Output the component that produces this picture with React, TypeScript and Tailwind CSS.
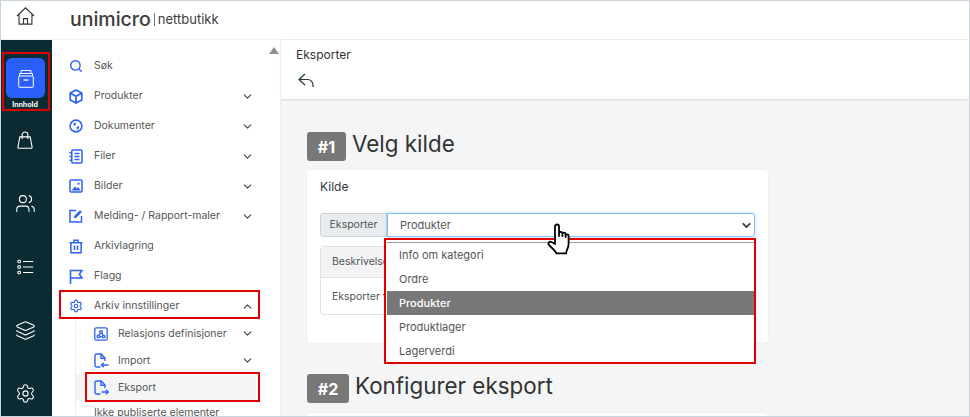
import { ReactNode } from "react";
import { ChevronDown, ChevronUp, Search, Settings, Layers, Users } from "lucide-react";

const blue = "#2f62f5";

function Outline({ w = 14, h = 14, sw = 1.6, children }: { w?: number; h?: number; sw?: number; children: ReactNode }) {
  return (
    <svg width={w} height={h} viewBox={`0 0 ${w} ${h}`} fill="none" stroke={blue} strokeWidth={sw}>
      {children}
    </svg>
  );
}

function CubeIcon() {
  return (
    <Outline h={15} sw={1.7}>
      <path d="M7 1 12.8 4v7L7 14 1.2 11V4zM1.5 4.3 7 7.2l5.5-2.9M7 7.2V14" />
    </Outline>
  );
}

function CompassIcon() {
  return (
    <Outline>
      <circle cx="7" cy="7" r="5.9" />
      <path d="M4 4.8 6.6 3.6 7 5.2 5.4 7zM7.6 8l2-1 .6 2-2 2z" fill={blue} stroke="none" />
    </Outline>
  );
}

function NotebookIcon() {
  return (
    <Outline h={15} sw={1.5}>
      <rect x="2.8" y="1" width="10.2" height="13" rx="1" />
      <path d="M0.5 3.7h2.3M0.5 7.5h2.3M0.5 11.3h2.3M5.5 4.5h5M5.5 7.5h5M5.5 10.5h5" />
    </Outline>
  );
}

function PictureIcon() {
  return (
    <Outline sw={1.5}>
      <rect x="1" y="1" width="12" height="12" rx="1" />
      <path d="M2.5 11.5 6 7.5l2 2 1.5-1.2 2 3.2z" fill={blue} stroke="none" />
      <circle cx="9.6" cy="4.7" r="1.1" fill={blue} stroke="none" />
    </Outline>
  );
}

function PenIcon() {
  return (
    <Outline sw={1.5}>
      <path d="M7 1.5H1v11.5h11.5V7" />
      <path d="M4.8 9.2 5.4 6.8 11 1.2l1.9 1.9L7.2 8.7z" fill={blue} stroke="none" />
    </Outline>
  );
}

function TrashIcon() {
  return (
    <Outline h={15} sw={1.5}>
      <path d="M0.6 3.7h12.8M1.9 3.7v10h10.2v-10M5 3.5V1.2h4v2.3M5.5 6.5v4.5M8.5 6.5v4.5" />
    </Outline>
  );
}

function FlagIcon() {
  return (
    <Outline h={15} sw={1.6}>
      <path d="M1.5 15V1.5h11.5L10.4 5.2 13 9H1.5" />
    </Outline>
  );
}

function RelationsIcon() {
  return (
    <Outline sw={1.3}>
      <rect x="0.8" y="0.8" width="12.4" height="12.4" rx="1.5" />
      <circle cx="7" cy="5" r="1.4" />
      <circle cx="4.3" cy="9.6" r="1.3" />
      <circle cx="9.7" cy="9.6" r="1.3" />
      <path d="M6.3 6.3 5 8.4M7.7 6.3 9 8.4M5.6 9.6h2.8" />
    </Outline>
  );
}

function FileArrowIcon({ dir }: { dir: "in" | "out" }) {
  return (
    <Outline w={15} h={15} sw={1.4}>
      <path d="M6.5 14H2.5a1.5 1.5 0 0 1-1.5-1.5v-10A1.5 1.5 0 0 1 2.5 1h4.7L11 5v3" />
      <path d="M7 1v4.2h4" />
      {dir === "in" ? <path d="M14.5 12H7.5M9.7 9.8 7.5 12l2.2 2.2" /> : <path d="M7.5 12h6.8M12 9.8l2.3 2.2-2.3 2.2" />}
    </Outline>
  );
}

function ItemRow({
  icon,
  label,
  chevron,
  sub,
  active,
}: {
  icon: ReactNode;
  label: string;
  chevron?: "down" | "up";
  sub?: boolean;
  active?: boolean;
}) {
  return (
    <div className={`flex items-center ${sub ? "h-[27px] pl-[16px]" : "h-[30px]"} ${active ? "bg-[#f4f5f7]" : ""}`}>
      <div className="w-[18px] flex justify-center shrink-0">{icon}</div>
      <div className={`${sub ? "ml-[8px]" : "ml-[9px]"} text-[10.5px] text-[#555] flex-1 whitespace-nowrap`}>{label}</div>
      {chevron === "down" && <ChevronDown size={13} strokeWidth={2} className="text-[#444] mr-[2px]" />}
      {chevron === "up" && <ChevronUp size={13} strokeWidth={2} className="text-[#444] mr-[2px]" />}
    </div>
  );
}

function RailIcon({ children, className }: { children: ReactNode; className: string }) {
  return <div className={`flex justify-center pr-[3px] ${className}`}>{children}</div>;
}

function SectionTitle({ num, title, badge }: { num: string; title: string; badge: string }) {
  return (
    <div className="flex items-center gap-[6px] h-[29px]">
      <div className={`${badge} h-[29px] rounded-[3px] bg-[#787878] text-white font-bold text-[16px] flex items-center justify-center`}>
        {num}
      </div>
      <div className="text-[22.4px] text-[#333] leading-none whitespace-nowrap pb-[5px]">{title}</div>
    </div>
  );
}

export default function App() {
  const options = ["Info om kategori", "Ordre", "Produkter", "Produktlager", "Lagerverdi"];
  return (
    <div
      className="relative w-[970px] h-[417px] overflow-hidden flex flex-col bg-white border border-[#c8d4de]"
      style={{ fontFamily: "Inter, 'Noto Sans', sans-serif" }}
    >
      {/* top bar */}
      <div className="h-[39px] shrink-0 flex border-b border-[#eceef0]">
        <div className="w-[51px] flex justify-center pt-[6px] pr-[3px]">
          <svg className="self-start" width="19" height="18" viewBox="0 0 22 21" fill="none" stroke="#333" strokeWidth="1.3">
            <path d="M1 10.5 11 1l10 9.5M3.5 8.5V20h15V8.5M8.7 20v-6.5h4.6V20" />
          </svg>
        </div>
        <div className="ml-[18px] pt-[7px] flex items-center self-start text-[#3c3c3c]">
          <span className="text-[19.5px] font-medium leading-[22px]">unimicro</span>
          <span className="mx-[3px] h-[13px] w-px bg-[#777]" />
          <span className="text-[13px] leading-[22px]">nettbutikk</span>
        </div>
      </div>

      <div className="flex-1 flex min-h-0">
        {/* icon rail */}
        <div className="w-[51px] shrink-0 bg-[#0b2b33] flex flex-col text-white">
          <div className="mt-[18px] ml-[5px] mr-[7px] h-[40px] rounded-[6px] bg-[#2b5ffb] flex items-center justify-center">
            <svg width="16" height="19" viewBox="0 0 16 19" fill="none" stroke="#fff" strokeWidth="1">
              <path d="M3 4V1.5h10V4M1.5 7V4.5h13V7" />
              <rect x="0.7" y="7" width="14.6" height="11.3" rx="0.8" />
              <path d="M5.5 11h5" strokeWidth="1.3" />
            </svg>
          </div>
          <div className="mt-[1px] pr-[3px] text-center text-[7px] font-bold leading-[12px]">Innhold</div>
          <RailIcon className="mt-[20px]">
            <svg width="16" height="18" viewBox="0 0 18 20" fill="none" stroke="#fff" strokeWidth="1.2">
              <path d="M3.2 6.5h11.6L17 18a1 1 0 0 1-1 1.2H2A1 1 0 0 1 1 18zM5.8 9V4.2a3.2 3.2 0 0 1 6.4 0V9" />
            </svg>
          </RailIcon>
          <RailIcon className="mt-[44px]">
            <Users size={21} strokeWidth={1.2} />
          </RailIcon>
          <RailIcon className="mt-[45px]">
            <svg width="17" height="16" viewBox="0 0 20 18" fill="none" stroke="#fff" strokeWidth="1.2">
              <rect x="1" y="1" width="3" height="3" rx="1" />
              <rect x="1" y="7.5" width="3" height="3" rx="1" />
              <rect x="1" y="14" width="3" height="3" rx="1" />
              <path d="M7 2.5h12M7 9h12M7 15.5h12" />
            </svg>
          </RailIcon>
          <RailIcon className="mt-[45px]">
            <Layers size={21} strokeWidth={1.2} />
          </RailIcon>
          <RailIcon className="mt-[42px]">
            <Settings size={21} strokeWidth={1.2} />
          </RailIcon>
        </div>

        {/* menu */}
        <div className="relative w-[229px] shrink-0 border-r border-[#eceef0] pt-[11px] pl-[15px] pr-[24px] overflow-hidden">
          <ItemRow icon={<Search size={14} color={blue} strokeWidth={2.4} />} label="Søk" />
          <ItemRow icon={<CubeIcon />} label="Produkter" chevron="down" />
          <ItemRow icon={<CompassIcon />} label="Dokumenter" chevron="down" />
          <ItemRow icon={<NotebookIcon />} label="Filer" chevron="down" />
          <ItemRow icon={<PictureIcon />} label="Bilder" chevron="down" />
          <ItemRow icon={<PenIcon />} label="Melding- / Rapport-maler" chevron="down" />
          <ItemRow icon={<TrashIcon />} label="Arkivlagring" />
          <ItemRow icon={<FlagIcon />} label="Flagg" />
          <ItemRow icon={<Settings size={14} color={blue} strokeWidth={2} />} label="Arkiv innstillinger" chevron="up" />
          <div className="-mt-[1px] ml-[8px] border-l border-[#eceef0]">
            <ItemRow sub icon={<RelationsIcon />} label="Relasjons definisjoner" chevron="down" />
            <ItemRow sub icon={<FileArrowIcon dir="in" />} label="Import" chevron="down" />
            <ItemRow sub active icon={<FileArrowIcon dir="out" />} label="Eksport" />
            <div className="h-[20px] pl-[18px] pt-[4px] text-[10.5px] text-[#555] leading-[15px] whitespace-nowrap">
              Ikke publiserte elementer
            </div>
          </div>
          <div className="absolute top-[7px] right-[1px] w-0 h-0 border-l-[5px] border-r-[5px] border-b-[7px] border-l-transparent border-r-transparent border-b-[#909090]" />
        </div>

        {/* main */}
        <div className="flex-1 min-w-0 bg-[#f4f5f7]">
          <div className="h-[59px] bg-white shadow-[0_1px_2px_rgba(0,0,0,0.12)] pl-[15px] pt-[7px]">
            <div className="text-[12px] text-[#333] leading-[16px]">Eksporter</div>
            <svg className="mt-[10px] ml-[2px]" width="16" height="15" viewBox="0 0 16 15" fill="none" stroke="#1d3640" strokeWidth="1.2">
              <path d="M7 1 1 6.5 7 12M1 6.5h8.5a5.5 5.5 0 0 1 5.5 5.5v2" />
            </svg>
          </div>
          <div className="pt-[33px] pl-[26px] w-[487px]">
            <SectionTitle num="#1" title="Velg kilde" badge="w-[39px]" />
            <div className="mt-[9px] h-[173px] bg-white rounded-[4px] shadow-[0_0_2px_rgba(0,0,0,0.08)] px-[13px] pt-[9px]">
              <div className="text-[12px] text-[#333] leading-[16px]">Kilde</div>
              <div className="mt-[18px] flex h-[24px]">
                <div className="w-[67px] bg-[#e9ecef] border border-[#ced4da] rounded-l-[3px] text-[10.5px] text-[#555] flex items-center justify-center">
                  Eksporter
                </div>
                <div className="flex-1 flex items-center justify-between bg-white border border-[#80bdff] rounded-r-[3px] pl-[12px] pr-[1px] shadow-[0_0_0_2px_rgba(0,123,255,0.08)] text-[11px] text-[#555]">
                  Produkter
                  <ChevronDown size={13} strokeWidth={3.5} className="text-[#444]" />
                </div>
              </div>
              <div className="mt-[9px] h-[69px] border border-[#dee2e6] rounded-[3px] text-[10.5px] text-[#555]">
                <div className="h-[31px] bg-[#f1f3f5] border-b border-[#dee2e6] pl-[11px] flex items-center">Beskrivelse</div>
                <div className="h-[37px] pl-[11px] flex items-center">Eksporter v</div>
              </div>
            </div>
            <div className="mt-[31px]">
              <SectionTitle num="#2" title="Konfigurer eksport" badge="w-[42px]" />
            </div>
            <div className="mt-[10px] h-[40px] bg-white rounded-[4px] shadow-[0_0_2px_rgba(0,0,0,0.08)]" />
          </div>
        </div>
      </div>

      {/* open select list */}
      <div className="absolute left-[385px] top-[237px] w-[369px] h-[125px] bg-white pt-[4px] px-[1px] text-[11px] text-[#555]">
        <div className="border-t border-[#999]">
          {options.map((o) => (
            <div
              key={o}
              className={`h-[24px] pl-[12px] flex items-center ${o === "Produkter" ? "bg-[#787878] text-white font-medium" : ""}`}
            >
              {o}
            </div>
          ))}
        </div>
      </div>

      {/* red callouts */}
      <div className="absolute left-[1px] top-[51px] w-[48px] h-[59px] border-[2px] border-[#e00000]" />
      <div className="absolute left-[58px] top-[289px] w-[201px] h-[29px] border-[2px] border-[#e00000]" />
      <div className="absolute left-[84px] top-[371px] w-[175px] h-[30px] border-[2px] border-[#e00000]" />
      <div className="absolute left-[383px] top-[237px] w-[372px] h-[126px] border-[2px] border-[#e00000]" />

      {/* hand cursor */}
      <svg className="absolute left-[546px] top-[222px]" width="26" height="33" viewBox="0 0 26 33" fill="#fff" stroke="#000" strokeWidth="1.8" strokeLinejoin="round">
        <path d="M8 21V3.5a2 2 0 0 1 4 0V13l0-2.5a1.7 1.7 0 0 1 3.4 0V13l0-1.7a1.6 1.6 0 0 1 3.2 0V14l0-1.2a1.5 1.5 0 0 1 3 0v8c0 2-.4 3.4-1.2 5-.8 1.8-1.2 3-1.2 4.5H9.5c-1-2-2.2-3.2-4-4.8L2 22a2 2 0 0 1 2.6-3z" />
      </svg>
    </div>
  );
}
